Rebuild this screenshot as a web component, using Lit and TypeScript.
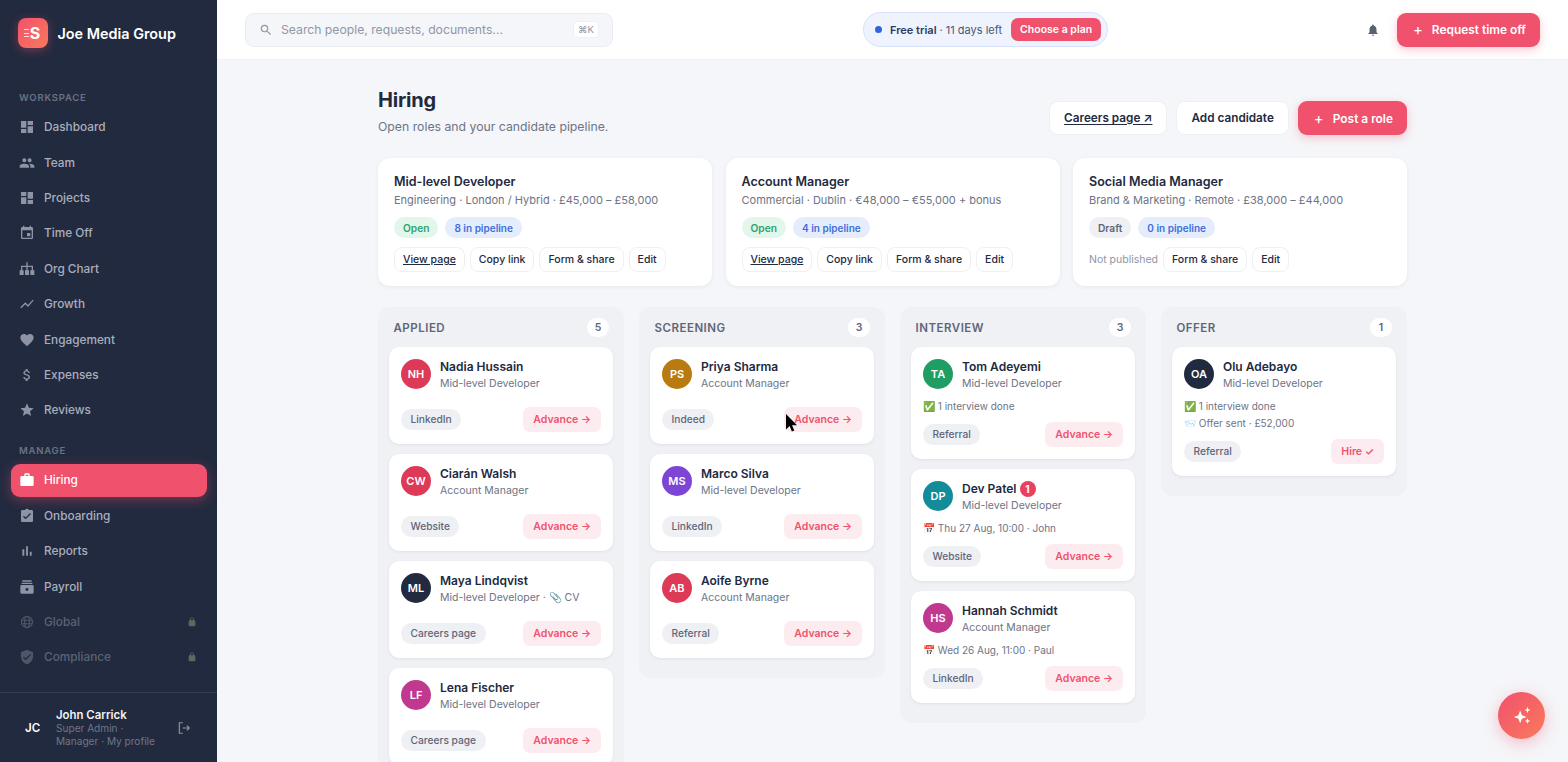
import { LitElement, css, html, svg } from 'lit';
import { customElement } from 'lit/decorators.js';

const paths: Record<string, string> = {
  dashboard: 'M3 13h8V3H3v10zm0 8h8v-6H3v6zm10 0h8V11h-8v10zm0-18v6h8V3h-8z',
  projects: 'M3 3h8v6H3V3zm0 8h8v10H3V11zm10-8h8v10h-8V3zm0 12h8v6h-8v-6z',
  team: 'M16 11c1.66 0 2.99-1.34 2.99-3S17.66 5 16 5c-1.66 0-3 1.34-3 3s1.34 3 3 3zm-8 0c1.66 0 2.99-1.34 2.99-3S9.66 5 8 5C6.34 5 5 6.34 5 8s1.34 3 3 3zm0 2c-2.33 0-7 1.17-7 3.5V19h14v-2.5c0-2.33-4.67-3.5-7-3.5zm8 0c-.29 0-.62.02-.97.05 1.16.84 1.97 1.97 1.97 3.45V19h6v-2.5c0-2.33-4.67-3.5-7-3.5z',
  event: 'M17 12h-5v5h5v-5zM16 1v2H8V1H6v2H5c-1.11 0-1.99.9-1.99 2L3 19c0 1.1.89 2 2 2h14c1.1 0 2-.9 2-2V5c0-1.1-.9-2-2-2h-1V1h-2zm3 18H5V8h14v11z',
  org: 'M11 2h2v5h8v7h2v7h-6v-7h2V9h-6v5h2v7H9v-7h2V9H5v5h2v7H1v-7h2V7h8V2z',
  growth: 'M3.5 18.49l6-6.01 4 4L22 6.92l-1.41-1.41-7.09 7.97-4-4L2 16.99z',
  heart: 'M12 21.35l-1.45-1.32C5.4 15.36 2 12.28 2 8.5 2 5.42 4.42 3 7.5 3c1.74 0 3.41.81 4.5 2.09C13.09 3.81 14.76 3 16.5 3 19.58 3 22 5.42 22 8.5c0 3.78-3.4 6.86-8.55 11.54L12 21.35z',
  dollar: 'M11.8 10.9c-2.27-.59-3-1.2-3-2.15 0-1.09 1.01-1.85 2.7-1.85 1.78 0 2.44.85 2.5 2.1h2.21c-.07-1.72-1.12-3.3-3.21-3.81V3h-3v2.16c-1.94.42-3.5 1.68-3.5 3.61 0 2.31 1.91 3.46 4.7 4.13 2.5.6 3 1.48 3 2.41 0 .69-.49 1.79-2.7 1.79-2.06 0-2.87-.92-2.98-2.1h-2.2c.12 2.19 1.76 3.42 3.68 3.83V21h3v-2.15c1.95-.37 3.5-1.5 3.5-3.55 0-2.84-2.43-3.81-4.7-4.4z',
  star: 'M12 17.27L18.18 21l-1.64-7.03L22 9.24l-7.19-.61L12 2 9.19 8.63 2 9.24l5.46 4.73L5.82 21z',
  work: 'M20 6h-4V4c0-1.11-.89-2-2-2h-4c-1.11 0-2 .89-2 2v2H4c-1.11 0-1.99.89-1.99 2L2 19c0 1.11.89 2 2 2h16c1.11 0 2-.89 2-2V8c0-1.11-.89-2-2-2zm-6 0h-4V4h4v2z',
  assign: 'M19 3h-4.18C14.4 1.84 13.3 1 12 1c-1.3 0-2.4.84-2.82 2H5c-1.1 0-2 .9-2 2v14c0 1.1.9 2 2 2h14c1.1 0 2-.9 2-2V5c0-1.1-.9-2-2-2zm-9 14l-4-4 1.41-1.41L10 14.17l6.59-6.59L18 9l-8 8z',
  bars: 'M5 9.2h3V19H5zM10.6 5h2.8v14h-2.8zm5.6 8H19v6h-2.8z',
  payroll: 'M5 2h14v2H5V2zM4 5.5h16v2H4v-2zM4 9h16a2 2 0 0 1 2 2v9a2 2 0 0 1-2 2H4a2 2 0 0 1-2-2v-9a2 2 0 0 1 2-2zm8 4.5a2.2 2.2 0 1 0 0 4.4 2.2 2.2 0 0 0 0-4.4z',
  shield: 'M12 1L3 5v6c0 5.55 3.84 10.74 9 12 5.16-1.26 9-6.45 9-12V5l-9-4zm-2 16l-4-4 1.41-1.41L10 14.17l6.59-6.59L18 9l-8 8z',
  bell: 'M12 22c1.1 0 2-.9 2-2h-4c0 1.1.9 2 2 2zm6-6v-5c0-3.07-1.63-5.64-4.5-6.32V4c0-.83-.67-1.5-1.5-1.5s-1.5.67-1.5 1.5v.68C7.64 5.36 6 7.92 6 11v5l-2 2v1h16v-1l-2-2z',
  search: 'M15.5 14h-.79l-.28-.27A6.47 6.47 0 0 0 16 9.5 6.5 6.5 0 1 0 9.5 16c1.61 0 3.09-.59 4.23-1.57l.27.28v.79l5 4.99L20.49 19l-4.99-5zm-6 0C7.01 14 5 11.99 5 9.5S7.01 5 9.5 5 14 7.01 14 9.5 11.99 14 9.5 14z',
  lock: 'M18 8h-1V6c0-2.76-2.24-5-5-5S7 3.24 7 6v2H6c-1.1 0-2 .9-2 2v10c0 1.1.9 2 2 2h12c1.1 0 2-.9 2-2V10c0-1.1-.9-2-2-2zM8.9 6c0-1.71 1.39-3.1 3.1-3.1 1.71 0 3.1 1.39 3.1 3.1v2H8.9V6z',
  sparkle: 'M10 6l1.9 5.1L17 13l-5.1 1.9L10 20l-1.9-5.1L3 13l5.1-1.9zM18 2l.9 2.6 2.6.9-2.6.9L18 9l-.9-2.6-2.6-.9 2.6-.9zM18 14.5l.9 2.1 2.1.9-2.1.9L18 20.5l-.9-2.1-2.1-.9 2.1-.9z',
  cursor: 'M0 0v15.5l3.6-3.4 2.3 5.4 2.4-1-2.3-5.3h5z',
};

const icon = (name: string, size = 16) => html`<svg width=${size} height=${size} viewBox="0 0 24 24" fill="currentColor">${svg`<path d=${paths[name]}></path>`}</svg>`;

const globe = html`<svg width="14" height="14" viewBox="0 0 24 24" fill="none" stroke="currentColor" stroke-width="2"><circle cx="12" cy="12" r="9.5"></circle><ellipse cx="12" cy="12" rx="4.2" ry="9.5"></ellipse><path d="M3 9h18M3 15h18"></path></svg>`;

type Nav = { label: string; icon: string; active?: boolean; locked?: boolean };

const workspace: Nav[] = [
  { label: 'Dashboard', icon: 'dashboard' },
  { label: 'Team', icon: 'team' },
  { label: 'Projects', icon: 'projects' },
  { label: 'Time Off', icon: 'event' },
  { label: 'Org Chart', icon: 'org' },
  { label: 'Growth', icon: 'growth' },
  { label: 'Engagement', icon: 'heart' },
  { label: 'Expenses', icon: 'dollar' },
  { label: 'Reviews', icon: 'star' },
];

const manage: Nav[] = [
  { label: 'Hiring', icon: 'work', active: true },
  { label: 'Onboarding', icon: 'assign' },
  { label: 'Reports', icon: 'bars' },
  { label: 'Payroll', icon: 'payroll' },
  { label: 'Global', icon: 'globe', locked: true },
  { label: 'Compliance', icon: 'shield', locked: true },
];

const roles = [
  { title: 'Mid-level Developer', meta: 'Engineering · London / Hybrid · £45,000 – £58,000', status: 'Open', pipeline: '8 in pipeline' },
  { title: 'Account Manager', meta: 'Commercial · Dublin · €48,000 – €55,000 + bonus', status: 'Open', pipeline: '4 in pipeline' },
  { title: 'Social Media Manager', meta: 'Brand & Marketing · Remote · £38,000 – £44,000', status: 'Draft', pipeline: '0 in pipeline' },
];

type Candidate = { initials: string; color: string; name: string; role: string; source: string; notes?: string[]; badge?: string; action?: string };

const columns: { title: string; count: number; cards: Candidate[] }[] = [
  {
    title: 'APPLIED', count: 5, cards: [
      { initials: 'NH', color: '#dc3a57', name: 'Nadia Hussain', role: 'Mid-level Developer', source: 'LinkedIn' },
      { initials: 'CW', color: '#dc3a57', name: 'Ciarán Walsh', role: 'Account Manager', source: 'Website' },
      { initials: 'ML', color: '#222a3f', name: 'Maya Lindqvist', role: 'Mid-level Developer · 📎 CV', source: 'Careers page' },
      { initials: 'LF', color: '#c0398f', name: 'Lena Fischer', role: 'Mid-level Developer', source: 'Careers page' },
    ],
  },
  {
    title: 'SCREENING', count: 3, cards: [
      { initials: 'PS', color: '#b97a10', name: 'Priya Sharma', role: 'Account Manager', source: 'Indeed' },
      { initials: 'MS', color: '#7c45d6', name: 'Marco Silva', role: 'Mid-level Developer', source: 'LinkedIn' },
      { initials: 'AB', color: '#dc3a57', name: 'Aoife Byrne', role: 'Account Manager', source: 'Referral' },
    ],
  },
  {
    title: 'INTERVIEW', count: 3, cards: [
      { initials: 'TA', color: '#1f9d63', name: 'Tom Adeyemi', role: 'Mid-level Developer', source: 'Referral', notes: ['✅ 1 interview done'] },
      { initials: 'DP', color: '#128c98', name: 'Dev Patel', role: 'Mid-level Developer', source: 'Website', badge: '1', notes: ['📅 Thu 27 Aug, 10:00 · John'] },
      { initials: 'HS', color: '#c0398f', name: 'Hannah Schmidt', role: 'Account Manager', source: 'LinkedIn', notes: ['📅 Wed 26 Aug, 11:00 · Paul'] },
    ],
  },
  {
    title: 'OFFER', count: 1, cards: [
      { initials: 'OA', color: '#222a3f', name: 'Olu Adebayo', role: 'Mid-level Developer', source: 'Referral', action: 'Hire ✓', notes: ['✅ 1 interview done', '📨 Offer sent · £52,000'] },
    ],
  },
];

@customElement('app-root')
export class AppRoot extends LitElement {
  static override styles = css`
    :host {
      display: flex;
      height: 100vh;
      overflow: hidden;
      position: relative;
      font-family: Inter, 'Noto Sans', sans-serif;
      color: #222a3f;
      background: #f5f6f9;
    }
    * { box-sizing: border-box; }

    .sidebar {
      width: 217px;
      flex: none;
      background: #222a3f;
      display: flex;
      flex-direction: column;
      height: 100%;
    }
    .brand {
      display: flex;
      gap: 10px;
      padding: 18px 17.5px 0;
      height: 72px;
      flex: none;
      align-items: flex-start;
      color: #fff;
      font-size: 14.4px;
      font-weight: 600;
    }
    .brand span { line-height: 31px; }
    .logo {
      width: 30px;
      height: 30px;
      border-radius: 8px;
      background: linear-gradient(135deg, #f0516d, #fb7a5c);
      box-shadow: 0 2px 10px rgba(240, 81, 109, .4);
      display: flex;
      align-items: center;
      justify-content: center;
      font-size: 16px;
      font-weight: 700;
      color: #fff;
      position: relative;
      padding-left: 5px;
    }
    .logo i {
      position: absolute;
      left: 6px;
      top: 11px;
      width: 5px;
      height: 8px;
      border-top: 1px solid rgba(255, 255, 255, .8);
      border-bottom: 1px solid rgba(255, 255, 255, .8);
    }
    .logo i::after {
      content: '';
      position: absolute;
      left: 0;
      top: 2.5px;
      width: 5px;
      height: 1px;
      background: rgba(255, 255, 255, .8);
    }
    .nav { flex: 1; padding: 0 10.5px; }
    .section {
      font-size: 9.5px;
      font-weight: 600;
      letter-spacing: .8px;
      color: #6b7284;
      padding-left: 8.5px;
      line-height: 12px;
    }
    .section.first { margin-top: 20px; margin-bottom: 6.6px; }
    .section.second { margin-top: 17.6px; margin-bottom: 7px; }
    .item {
      height: 33.4px;
      margin-bottom: 2px;
      display: flex;
      align-items: center;
      gap: 10px;
      padding: 0 9.5px;
      border-radius: 9px;
      font-size: 11.8px;
      color: #a9afbd;
      font-weight: 500;
    }
    .item svg { flex: none; }
    .item .ic { width: 14px; display: flex; justify-content: center; color: #8e94a5; }
    .item.active { background: #f0516d; color: #fff; box-shadow: 0 3px 12px rgba(240, 81, 109, .4); }
    .item.active .ic { color: #fff; }
    .item.locked { opacity: .42; }
    .item .lock { margin-left: auto; color: #b7b98f; display: flex; }
    .user {
      height: 70px;
      flex: none;
      border-top: 1px solid #363d51;
      display: flex;
      align-items: center;
      padding-left: 25px;
      padding-right: 26px;
      color: #fff;
    }
    .user .ini { width: 31px; flex: none; font-size: 11.5px; font-weight: 600; }
    .user .who { flex: 1; font-size: 10.1px; line-height: 13px; color: #6f7688; }
    .user .who b { display: block; font-size: 11.4px; font-weight: 600; color: #f2f3f6; line-height: 14px; }
    .user svg { color: #8e94a5; flex: none; }

    .page { flex: 1; min-width: 0; display: flex; flex-direction: column; }
    .topbar {
      height: 60px;
      flex: none;
      background: #fff;
      border-bottom: 1px solid #eef0f4;
      display: flex;
      align-items: center;
      padding: 0 28px;
    }
    .search {
      width: 368px;
      height: 34px;
      flex: none;
      border: 1px solid #eaecf1;
      border-radius: 9px;
      background: #f5f6f9;
      display: flex;
      align-items: center;
      gap: 8px;
      padding: 0 13px;
      color: #9096a5;
      font-size: 12.2px;
    }
    .search span { flex: 1; }
    .search kbd {
      font-family: inherit;
      font-size: 9.5px;
      color: #9096a5;
      background: #fff;
      border-radius: 4px;
      border: 1px solid #eef0f4;
      padding: 2px 4px;
    }
    .trial {
      margin-left: 250px;
      height: 35px;
      border: 1px solid #d7e2fa;
      border-radius: 18px;
      background: #eef3fe;
      display: flex;
      align-items: center;
      padding: 0 6px 0 11px;
      font-size: 11px;
      color: #4a5876;
      flex: none;
    }
    .trial i { width: 7px; height: 7px; border-radius: 50%; background: #2f66d8; margin-right: 8px; }
    .trial b { color: #2b3a63; font-weight: 600; margin-right: 3px; }
    .trial button {
      margin-left: 9px;
      height: 23px;
      border: 0;
      border-radius: 7px;
      background: #f0516d;
      color: #fff;
      font: 600 10.5px Inter, sans-serif;
      padding: 0 9px;
    }
    .bell { margin-left: auto; margin-right: 17px; color: #596073; display: flex; }
    .primary {
      height: 34px;
      border: 0;
      border-radius: 9px;
      background: #f0516d;
      color: #fff;
      font: 600 11.9px Inter, sans-serif;
      padding: 0 14px 0 16px;
      display: flex;
      align-items: center;
      gap: 9px;
      box-shadow: 0 3px 10px rgba(240, 81, 109, .3);
      flex: none;
    }
    .primary em { font-style: normal; font-weight: 400; font-size: 15px; line-height: 1; }

    .main { width: 1029px; align-self: center; padding-top: 28px; }
    .head { display: flex; align-items: flex-start; justify-content: space-between; }
    h1 { margin: 0; font-size: 20px; font-weight: 700; line-height: 24px; letter-spacing: -0.2px; }
    .sub { font-size: 12.25px; color: #6d7485; margin-top: 7px; line-height: 16px; }
    .actions { display: flex; gap: 9px; margin-top: 13px; }
    .ghost {
      height: 34px;
      border: 1px solid #eef0f4;
      border-radius: 9px;
      background: #fff;
      color: #222a3f;
      font: 600 11.75px Inter, sans-serif;
      padding: 0 14px;
      flex: none;
    }
    .ghost u { text-underline-offset: 2px; }
    .roles { display: grid; grid-template-columns: repeat(3, 1fr); gap: 13.5px; margin-top: 23px; }
    .role {
      height: 128px;
      background: #fff;
      border-radius: 12px;
      box-shadow: 0 1px 4px rgba(34, 42, 63, .07);
      padding: 15px 16px;
    }
    .role h3 { margin: 0; font-size: 12.5px; font-weight: 600; line-height: 17px; }
    .role p { margin: 2px 0 0; font-size: 11px; color: #6d7485; line-height: 17px; }
    .pills { display: flex; gap: 7px; margin-top: 8px; }
    .pill { height: 21px; border-radius: 11px; font-size: 10.2px; font-weight: 600; padding: 0 9px; display: flex; align-items: center; }
    .open { background: #e3f6ec; color: #30a46c; }
    .draft { background: #eef0f4; color: #5f6678; }
    .pipe { background: #e5edfd; color: #3d6fdc; font-size: 10px; }
    .links { display: flex; gap: 5px; margin-top: 9px; align-items: center; }
    .link {
      height: 25px;
      border: 1px solid #eef0f4;
      border-radius: 8px;
      background: #fff;
      color: #222a3f;
      font: 500 10.5px Inter, sans-serif;
      padding: 0 8px;
    }
    .note-np { font-size: 10.5px; color: #9096a5; }

    .board { display: grid; grid-template-columns: repeat(4, 246px); gap: 15px; margin-top: 21px; align-items: start; }
    .col { background: #eff1f5; border-radius: 12px; padding: 11px 11px 20px; }
    .col-head { display: flex; align-items: center; justify-content: space-between; height: 19px; margin-bottom: 10px; padding: 0 4px 0 4.5px; }
    .col-head span { font-size: 11.5px; font-weight: 600; letter-spacing: .5px; color: #5f6678; }
    .col-head b { min-width: 22px; height: 19px; border-radius: 10px; background: #fff; font-size: 10.5px; font-weight: 600; color: #5f6678; display: flex; align-items: center; justify-content: center; }
    .cards { display: flex; flex-direction: column; gap: 10.5px; }
    .card { background: #fff; border-radius: 10px; padding: 12px; box-shadow: 0 1px 3px rgba(34, 42, 63, .08); }
    .person { display: flex; gap: 9px; align-items: flex-start; min-height: 32px; }
    .avatar { width: 30px; height: 30px; border-radius: 50%; color: #fff; font-size: 11px; font-weight: 600; display: flex; align-items: center; justify-content: center; flex: none; }
    .name { font-size: 12px; font-weight: 600; line-height: 16px; display: flex; align-items: center; gap: 3px; }
    .badge { width: 16px; height: 16px; border-radius: 50%; background: #ea3f60; color: #fff; font-size: 10px; font-weight: 700; display: flex; align-items: center; justify-content: center; }
    .role-line { font-size: 10.5px; color: #6d7485; line-height: 15px; margin-top: 1px; }
    .notes { margin-top: 6.5px; font-size: 10px; color: #6d7485; line-height: 17px; }
    .foot { display: flex; justify-content: space-between; align-items: center; margin-top: 15.5px; }
    .notes + .foot { margin-top: 7px; }
    .tag { height: 21px; border-radius: 11px; background: #eef0f4; color: #5f6678; font-size: 10.2px; font-weight: 500; padding: 0 9.5px; display: flex; align-items: center; }
    .advance { height: 25px; border: 0; border-radius: 7px; background: #fdecef; color: #f0516d; font: 600 10.5px Inter, sans-serif; padding: 0 10px; }
    .fab {
      position: absolute;
      right: 23px;
      bottom: 23px;
      width: 47px;
      height: 47px;
      border-radius: 50%;
      background: linear-gradient(135deg, #f0516d, #fb7a5c);
      box-shadow: 0 4px 16px rgba(240, 81, 109, .35);
      color: #fff;
      display: flex;
      align-items: center;
      justify-content: center;
    }
    .cursor { position: absolute; left: 786px; top: 414px; color: #000; }
  `;

  private navItem(n: Nav) {
    return html`<div class="item ${n.active ? 'active' : ''} ${n.locked ? 'locked' : ''}">
      <span class="ic">${n.icon === 'globe' ? globe : icon(n.icon)}</span>${n.label}
      ${n.locked ? html`<span class="lock">${icon('lock', 10)}</span>` : ''}
    </div>`;
  }

  private candidate(c: Candidate) {
    return html`<div class="card">
      <div class="person">
        <div class="avatar" style="background:${c.color}">${c.initials}</div>
        <div>
          <div class="name">${c.name}${c.badge ? html`<span class="badge">${c.badge}</span>` : ''}</div>
          <div class="role-line">${c.role}</div>
        </div>
      </div>
      ${c.notes ? html`<div class="notes">${c.notes.map((n) => html`<div>${n}</div>`)}</div>` : ''}
      <div class="foot">
        <span class="tag">${c.source}</span>
        <button class="advance">${c.action ?? 'Advance →'}</button>
      </div>
    </div>`;
  }

  override render() {
    return html`
      <aside class="sidebar">
        <div class="brand"><div class="logo"><i></i>S</div><span>Joe Media Group</span></div>
        <nav class="nav">
          <div class="section first">WORKSPACE</div>
          ${workspace.map((n) => this.navItem(n))}
          <div class="section second">MANAGE</div>
          ${manage.map((n) => this.navItem(n))}
        </nav>
        <div class="user">
          <div class="ini">JC</div>
          <div class="who"><b>John Carrick</b>Super Admin ·<br />Manager · My profile</div>
          <svg width="14" height="14" viewBox="0 0 24 24" fill="none" stroke="currentColor" stroke-width="2"><path d="M10 3H4v18h6M10 12h11M17 8l4 4-4 4"></path></svg>
        </div>
      </aside>
      <div class="page">
        <header class="topbar">
          <div class="search">${icon('search', 14)}<span>Search people, requests, documents...</span><kbd>⌘K</kbd></div>
          <div class="trial"><i></i><b>Free trial</b> · 11 days left<button>Choose a plan</button></div>
          <span class="bell">${icon('bell', 14)}</span>
          <button class="primary"><em>+</em>Request time off</button>
        </header>
        <main class="main">
          <div class="head">
            <div><h1>Hiring</h1><div class="sub">Open roles and your candidate pipeline.</div></div>
            <div class="actions">
              <button class="ghost"><u>Careers page ↗</u></button>
              <button class="ghost">Add candidate</button>
              <button class="primary"><em>+</em>Post a role</button>
            </div>
          </div>
          <section class="roles">
            ${roles.map((r) => html`<div class="role">
              <h3>${r.title}</h3>
              <p>${r.meta}</p>
              <div class="pills">
                <span class="pill ${r.status === 'Open' ? 'open' : 'draft'}">${r.status}</span>
                <span class="pill pipe">${r.pipeline}</span>
              </div>
              <div class="links">
                ${r.status === 'Open'
                  ? html`<button class="link"><u>View page</u></button><button class="link">Copy link</button>`
                  : html`<span class="note-np">Not published</span>`}
                <button class="link">Form &amp; share</button>
                <button class="link">Edit</button>
              </div>
            </div>`)}
          </section>
          <section class="board">
            ${columns.map((c) => html`<div class="col">
              <div class="col-head"><span>${c.title}</span><b>${c.count}</b></div>
              <div class="cards">${c.cards.map((x) => this.candidate(x))}</div>
            </div>`)}
          </section>
        </main>
      </div>
      <div class="fab">${icon('sparkle', 22)}</div>
      <svg class="cursor" width="12" height="18" viewBox="0 0 12 18" fill="currentColor"><path d=${paths.cursor}></path></svg>
    `;
  }
}
